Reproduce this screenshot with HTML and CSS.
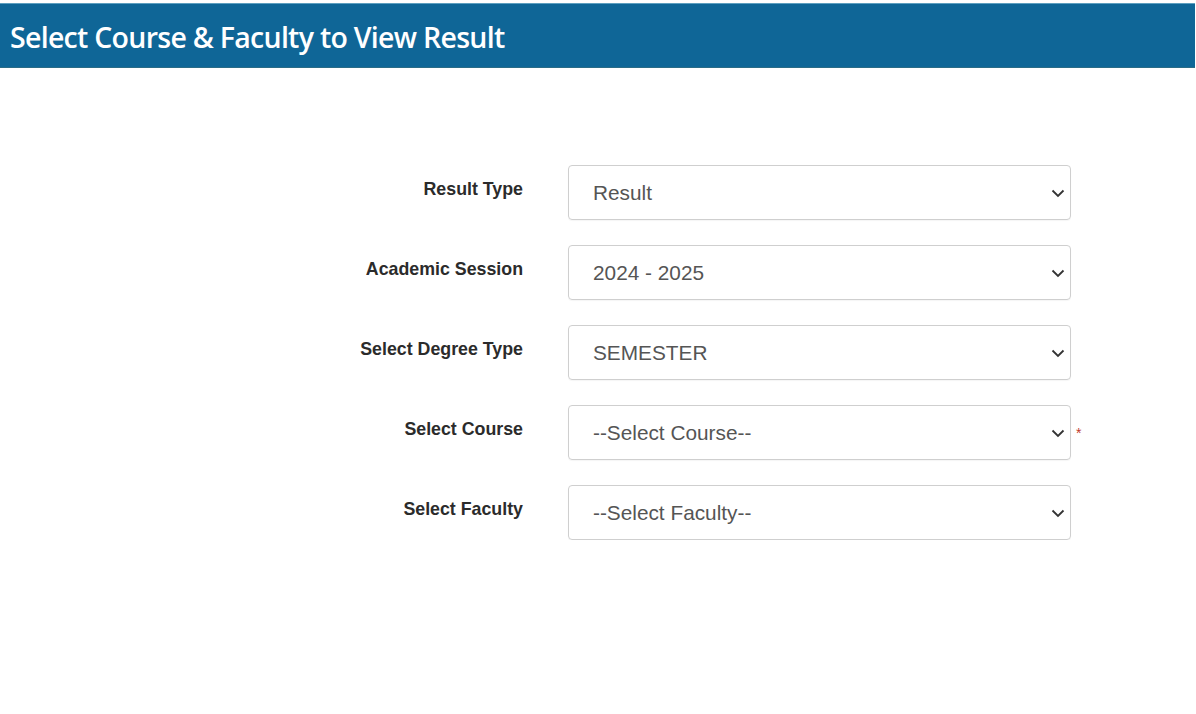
FILE: index.html
```html
<!DOCTYPE html>
<html>
<head>
<meta charset="utf-8">
<link rel="stylesheet" href="styles.css">
</head>
<body>
<header class="bar"><h1 class="title">Select Course &amp; Faculty to View Result</h1></header>
<main class="form">
  <div class="row">
    <label class="label">Result Type</label>
    <div class="select"><span>Result</span><svg class="chev" width="14" height="10" viewBox="0 0 14 10"><path d="M1.5 2.5 L7 8 L12.5 2.5" fill="none" stroke="#333" stroke-width="1.8"/></svg></div>
  </div>
  <div class="row">
    <label class="label">Academic Session</label>
    <div class="select"><span>2024 - 2025</span><svg class="chev" width="14" height="10" viewBox="0 0 14 10"><path d="M1.5 2.5 L7 8 L12.5 2.5" fill="none" stroke="#333" stroke-width="1.8"/></svg></div>
  </div>
  <div class="row">
    <label class="label">Select Degree Type</label>
    <div class="select"><span>SEMESTER</span><svg class="chev" width="14" height="10" viewBox="0 0 14 10"><path d="M1.5 2.5 L7 8 L12.5 2.5" fill="none" stroke="#333" stroke-width="1.8"/></svg></div>
  </div>
  <div class="row">
    <label class="label">Select Course</label>
    <div class="select"><span>--Select Course--</span><svg class="chev" width="14" height="10" viewBox="0 0 14 10"><path d="M1.5 2.5 L7 8 L12.5 2.5" fill="none" stroke="#333" stroke-width="1.8"/></svg></div>
    <span class="req">*</span>
  </div>
  <div class="row">
    <label class="label">Select Faculty</label>
    <div class="select"><span>--Select Faculty--</span><svg class="chev" width="14" height="10" viewBox="0 0 14 10"><path d="M1.5 2.5 L7 8 L12.5 2.5" fill="none" stroke="#333" stroke-width="1.8"/></svg></div>
  </div>
</main>
</body>
</html>
```
FILE: styles.css
```css
html, body { margin: 0; padding: 0; background: #fff; }
body { font-family: "Liberation Sans", Arial, sans-serif; }
.bar {
  margin-top: 3px;
  width: 1195px;
  height: 63px;
  background: #0f6697;
  border-top: 1px solid #5c9fc0;
  border-bottom: 1px solid #2b6c86;
  display: flex;
  align-items: center;
  box-sizing: content-box;
}
.title {
  margin: 0 0 0 10px;
  font-family: "Open Sans", sans-serif;
  font-weight: 600;
  font-size: 28.5px;
  letter-spacing: -0.72px;
  color: #fff;
  line-height: 1;
  padding-top: 4px;
}
.form {
  padding-top: 97px;
  display: flex;
  flex-direction: column;
  gap: 25px;
}
.row {
  display: grid;
  grid-template-columns: 523px 503px auto;
  column-gap: 45px;
  align-items: start;
  height: 55px;
}
.row .label {
  grid-column: 1;
  text-align: right;
  font-weight: bold;
  font-size: 17.8px;
  color: #2b2b2b;
  padding-top: 14px;
}
.select {
  grid-column: 2;
  box-sizing: border-box;
  height: 55px;
  border: 1px solid #cfcfcf;
  border-radius: 4px;
  display: flex;
  align-items: center;
  justify-content: space-between;
  padding: 0 5px 0 24px;
  font-size: 20.8px;
  color: #555;
  box-shadow: 0 1px 1px rgba(0,0,0,0.04);
}
.select span { padding-top: 0; }
.chev { display: block; }
.req {
  grid-column: 3;
  color: #c0392b;
  font-size: 14px;
  margin-left: -40px;
  padding-top: 20px;
}
```
